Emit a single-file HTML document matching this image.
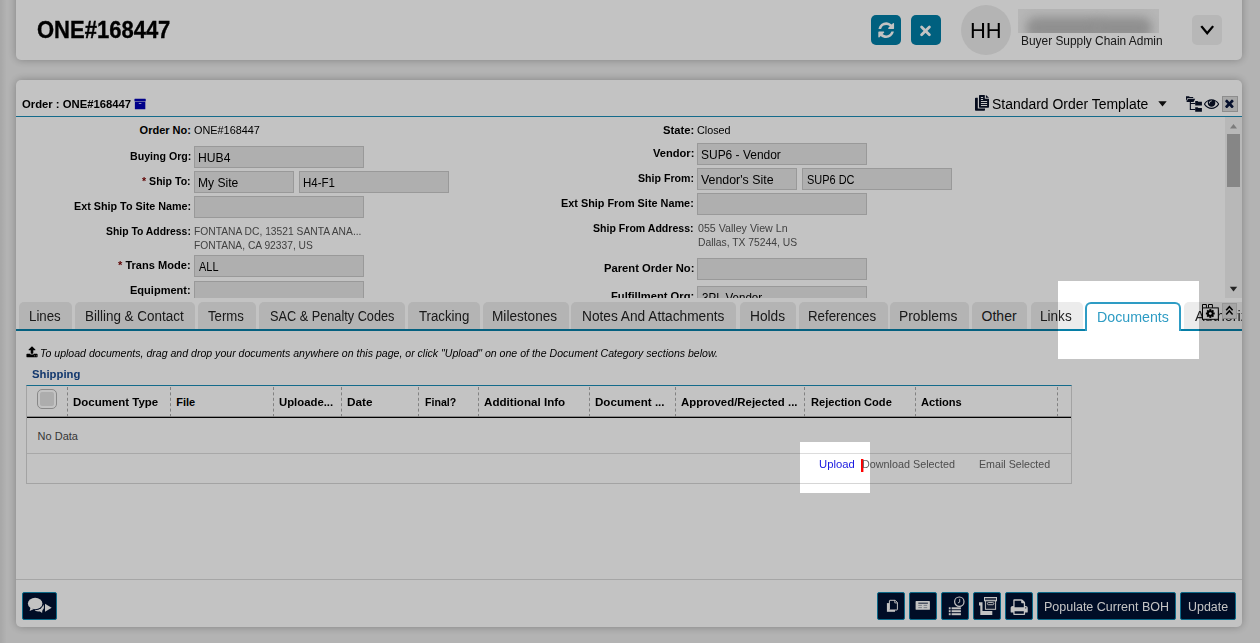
<!DOCTYPE html>
<html lang="en">
<head>
<meta charset="utf-8">
<title>ONE#168447</title>
<style>
html,body{margin:0;padding:0}
body{width:1260px;height:643px;overflow:hidden;position:relative;background:#ebebeb;font-family:"Liberation Sans",sans-serif}
.a{position:absolute;box-sizing:border-box}
.t{position:absolute;white-space:pre;transform-origin:0 0;font-family:"Liberation Sans",sans-serif}
.panel{background:#fff;box-shadow:0 0 9px rgba(0,0,0,.28)}
.inp{position:absolute;box-sizing:border-box;background:#e5e5e5;border:1px solid #c8c8c8;height:22px}
.tab{position:absolute;box-sizing:border-box;top:302px;height:27px;background:#ececec;border-radius:5px 5px 0 0}
.hb{position:absolute;box-sizing:border-box;top:15px;width:30px;height:30px;border-radius:5px;background:#007ea6}
.bb{position:absolute;box-sizing:border-box;top:592px;height:28px;background:#001132;border:1px solid #108bb4;border-radius:2px}
.sep{position:absolute;top:387px;height:30px;width:0;border-left:1px dashed #a9a9a9}
svg{position:absolute;overflow:visible}

</style>
</head>
<body>
<!-- top header bar -->
<div class="a" style="left:0;top:0;width:7px;height:643px;background:linear-gradient(to right,rgba(0,0,0,.07),rgba(0,0,0,0))"></div>
<div class="a panel" style="left:16px;top:-10px;width:1226px;height:70px;border-radius:0 0 5px 5px"></div>
<div class="hb" style="left:871px"></div>
<div class="hb" style="left:911px"></div>
<div class="a" style="left:961px;top:5px;width:50px;height:50px;border-radius:50%;background:#ececec"></div>
<div class="a" style="left:1018px;top:9px;width:141px;height:24px;background:#eeeeee;overflow:hidden"><div class="a" style="left:8px;top:8px;width:76px;height:22px;border-radius:10px;background:#bcbcbc;filter:blur(5px)"></div><div class="a" style="left:74px;top:8px;width:60px;height:22px;border-radius:10px;background:#bcbcbc;filter:blur(5px)"></div></div>
<div class="a" style="left:1192px;top:15px;width:30px;height:30px;border-radius:5px;background:#f0f0f0"></div>

<!-- main order panel -->
<div class="a panel" style="left:16px;top:80px;width:1226px;height:547px;border-radius:5px"></div>
<div class="a" style="left:16px;top:116px;width:1226px;height:1px;background:#1b8cb6"></div>

<!-- form scroll area -->
<div class="a" style="left:0;top:0;width:1260px;height:298px;overflow:hidden">
  <div class="inp" style="left:194px;top:146px;width:170px"></div>
  <div class="inp" style="left:194px;top:171px;width:100px"></div>
  <div class="inp" style="left:299px;top:171px;width:150px"></div>
  <div class="inp" style="left:194px;top:196px;width:170px"></div>
  <div class="inp" style="left:194px;top:255px;width:170px"></div>
  <div class="inp" style="left:194px;top:281px;width:170px"></div>
  <div class="inp" style="left:697px;top:143px;width:170px"></div>
  <div class="inp" style="left:697px;top:168px;width:100px"></div>
  <div class="inp" style="left:802px;top:168px;width:150px"></div>
  <div class="inp" style="left:697px;top:193px;width:170px"></div>
  <div class="inp" style="left:697px;top:258px;width:170px"></div>
  <div class="inp" style="left:697px;top:286px;width:170px"></div>
  <!-- scrollbar -->
  <div class="a" style="left:1225px;top:117px;width:17px;height:181px;background:#f1f1f1"></div>
  <div class="a" style="left:1227px;top:134px;width:13px;height:53px;background:#b0b0b0"></div>
  <svg style="left:1225px;top:117px" width="17" height="181" viewBox="0 0 17 181"><path d="M5 11.5 L8.5 7 L12 11.5Z" fill="#a3a3a3"/><path d="M4.800 169.800 L12.200 169.800 L8.500 174.600Z" fill="#303030"/></svg>
<span class="t" style="left:139.60px;top:123px;font-size:11px;line-height:14px;color:#000;font-weight:bold;">Order No:</span>
<span class="t" style="left:194.20px;top:123px;font-size:11px;line-height:14px;color:#000;transform:scaleX(0.9888);">ONE#168447</span>
<span class="t" style="left:129.60px;top:149px;font-size:11px;line-height:14px;color:#000;transform:scaleX(0.9652);font-weight:bold;">Buying Org:</span>
<span class="t" style="left:142.30px;top:174px;font-size:11px;line-height:14px;color:#000;transform:scaleX(0.9630);font-weight:bold;"><span style="color:#7a0000">*</span> Ship To:</span>
<span class="t" style="left:73.80px;top:199px;font-size:11px;line-height:14px;color:#000;transform:scaleX(0.9796);font-weight:bold;">Ext Ship To Site Name:</span>
<span class="t" style="left:105.70px;top:224px;font-size:11px;line-height:14px;color:#000;transform:scaleX(0.9444);font-weight:bold;">Ship To Address:</span>
<span class="t" style="left:194.40px;top:224px;font-size:11px;line-height:14px;color:#555;transform:scaleX(0.9338);">FONTANA DC, 13521 SANTA ANA...</span>
<span class="t" style="left:194.40px;top:238px;font-size:11px;line-height:14px;color:#555;transform:scaleX(0.9317);">FONTANA, CA 92337, US</span>
<span class="t" style="left:118.40px;top:258px;font-size:11px;line-height:14px;color:#000;transform:scaleX(1.0062);font-weight:bold;"><span style="color:#7a0000">*</span> Trans Mode:</span>
<span class="t" style="left:130.30px;top:283px;font-size:11px;line-height:14px;color:#000;transform:scaleX(1.0028);font-weight:bold;">Equipment:</span>
<span class="t" style="left:197.73px;top:150px;font-size:12.5px;line-height:16px;color:#000;transform:scaleX(0.9725);">HUB4</span>
<span class="t" style="left:197.63px;top:175px;font-size:12.5px;line-height:16px;color:#000;transform:scaleX(0.9675);">My Site</span>
<span class="t" style="left:302.98px;top:175px;font-size:12.5px;line-height:16px;color:#000;transform:scaleX(0.9207);">H4-F1</span>
<span class="t" style="left:198.50px;top:259px;font-size:12.5px;line-height:16px;color:#000;transform:scaleX(0.8749);">ALL</span>
<span class="t" style="left:663.00px;top:123px;font-size:11px;line-height:14px;color:#000;transform:scaleX(1.0201);font-weight:bold;">State:</span>
<span class="t" style="left:696.80px;top:123px;font-size:11px;line-height:14px;color:#000;transform:scaleX(0.9817);">Closed</span>
<span class="t" style="left:652.80px;top:146px;font-size:11px;line-height:14px;color:#000;transform:scaleX(1.0103);font-weight:bold;">Vendor:</span>
<span class="t" style="left:638.10px;top:171px;font-size:11px;line-height:14px;color:#000;transform:scaleX(0.9654);font-weight:bold;">Ship From:</span>
<span class="t" style="left:561.40px;top:196px;font-size:11px;line-height:14px;color:#000;transform:scaleX(0.9872);font-weight:bold;">Ext Ship From Site Name:</span>
<span class="t" style="left:593.20px;top:221px;font-size:11px;line-height:14px;color:#000;transform:scaleX(0.9602);font-weight:bold;">Ship From Address:</span>
<span class="t" style="left:697.50px;top:221px;font-size:11px;line-height:14px;color:#555;transform:scaleX(0.9683);">055 Valley View Ln</span>
<span class="t" style="left:697.50px;top:235px;font-size:11px;line-height:14px;color:#555;transform:scaleX(0.9399);">Dallas, TX 75244, US</span>
<span class="t" style="left:603.80px;top:261px;font-size:11px;line-height:14px;color:#000;transform:scaleX(1.0197);font-weight:bold;">Parent Order No:</span>
<span class="t" style="left:611.00px;top:289px;font-size:11px;line-height:14px;color:#000;transform:scaleX(1.0158);font-weight:bold;">Fulfillment Org:</span>
<span class="t" style="left:700.90px;top:147px;font-size:12.5px;line-height:16px;color:#000;transform:scaleX(0.9577);">SUP6 - Vendor</span>
<span class="t" style="left:700.90px;top:172px;font-size:12.5px;line-height:16px;color:#000;transform:scaleX(0.9903);">Vendor's Site</span>
<span class="t" style="left:806.50px;top:172px;font-size:12.5px;line-height:16px;color:#000;transform:scaleX(0.8771);">SUP6 DC</span>
<span class="t" style="left:701.60px;top:290px;font-size:12.5px;line-height:16px;color:#000;transform:scaleX(0.9268);">3PL Vendor</span>
</div>

<!-- tabs -->
<div class="a" style="left:0;top:0;width:1242px;height:643px;overflow:hidden">
  <div class="tab" style="left:18.5px;width:53px"></div>
  <div class="tab" style="left:74.5px;width:120px"></div>
  <div class="tab" style="left:197.5px;width:58px"></div>
  <div class="tab" style="left:258.5px;width:146px"></div>
  <div class="tab" style="left:407.5px;width:72px"></div>
  <div class="tab" style="left:482.5px;width:86px"></div>
  <div class="tab" style="left:571px;width:165px"></div>
  <div class="tab" style="left:739.5px;width:56px"></div>
  <div class="tab" style="left:798.5px;width:89px"></div>
  <div class="tab" style="left:889.5px;width:79px"></div>
  <div class="tab" style="left:971.5px;width:55.5px"></div>
  <div class="tab" style="left:1030.5px;width:52.5px"></div>
  <div class="tab" style="left:1183.5px;width:116px"></div>
  <div class="a" style="left:16px;top:329px;width:1226px;height:2px;background:#067ea6"></div>
  <div class="a" style="left:1085px;top:302px;width:96px;height:29px;background:#fff;border:2px solid #2e9cc4;border-bottom:0;border-radius:6px 6px 0 0"></div>
<span class="t" style="left:28.55px;top:307px;font-size:14px;line-height:18px;color:#222;transform:scaleX(0.9486);">Lines</span>
<span class="t" style="left:84.54px;top:307px;font-size:14px;line-height:18px;color:#222;transform:scaleX(0.9605);">Billing &amp; Contact</span>
<span class="t" style="left:208.30px;top:307px;font-size:14px;line-height:18px;color:#222;transform:scaleX(0.9420);">Terms</span>
<span class="t" style="left:269.80px;top:307px;font-size:14px;line-height:18px;color:#222;transform:scaleX(0.9083);">SAC &amp; Penalty Codes</span>
<span class="t" style="left:418.90px;top:307px;font-size:14px;line-height:18px;color:#222;transform:scaleX(0.9451);">Tracking</span>
<span class="t" style="left:492.33px;top:307px;font-size:14px;line-height:18px;color:#222;transform:scaleX(0.9740);">Milestones</span>
<span class="t" style="left:581.62px;top:307px;font-size:14px;line-height:18px;color:#222;transform:scaleX(0.9789);">Notes And Attachments</span>
<span class="t" style="left:749.52px;top:307px;font-size:14px;line-height:18px;color:#222;transform:scaleX(0.9801);">Holds</span>
<span class="t" style="left:808.25px;top:307px;font-size:14px;line-height:18px;color:#222;transform:scaleX(0.9505);">References</span>
<span class="t" style="left:899.21px;top:307px;font-size:14px;line-height:18px;color:#222;transform:scaleX(0.9857);">Problems</span>
<span class="t" style="left:981.60px;top:307px;font-size:14px;line-height:18px;color:#222;">Other</span>
<span class="t" style="left:1040.33px;top:307px;font-size:14px;line-height:18px;color:#222;transform:scaleX(0.9690);">Links</span>
<span class="t" style="left:1096.98px;top:308px;font-size:14px;line-height:18px;color:#2e9cc4;transform:scaleX(1.0157);">Documents</span>
<span class="t" style="left:1194.60px;top:307px;font-size:14px;line-height:18px;color:#222;transform:scaleX(1.0302);">Authorizations</span>
</div>

<!-- documents section -->
<div class="a" style="left:26px;top:385px;width:1046px;height:99px;border:1px solid #d6d6d6;border-top:1px solid #1b8cb6"></div>
<div class="a" style="left:27px;top:416px;width:1044px;height:1px;background:rgba(0,0,0,.3)"></div>
<div class="a" style="left:27px;top:417px;width:1044px;height:1px;background:#000"></div>
<div class="a" style="left:27px;top:453px;width:1044px;height:1px;background:#dcdcdc"></div>
<div class="a" style="left:37px;top:389px;width:20px;height:20px;border:1px solid #b2b2b2;border-radius:5px;background:#fff"></div>
<div class="a" style="left:40px;top:392px;width:14px;height:14px;border-radius:2px;background:#e3e3e3"></div>
<div class="sep" style="left:67px"></div>
<div class="sep" style="left:170px"></div>
<div class="sep" style="left:273px"></div>
<div class="sep" style="left:341px"></div>
<div class="sep" style="left:418px"></div>
<div class="sep" style="left:478px"></div>
<div class="sep" style="left:589px"></div>
<div class="sep" style="left:675px"></div>
<div class="sep" style="left:804px"></div>
<div class="sep" style="left:915px"></div>
<div class="sep" style="left:1057px"></div>
<div class="a" style="left:861px;top:459px;width:2px;height:13px;background:#ff0000"></div><div class="a" style="left:863px;top:459px;width:1px;height:13px;background:rgba(255,0,0,.4)"></div>

<!-- bottom toolbar -->
<div class="a" style="left:16px;top:579px;width:1226px;height:1px;background:#dadada"></div>
<div class="bb" style="left:22px;width:35px"></div>
<div class="bb" style="left:877px;width:28px"></div>
<div class="bb" style="left:909px;width:28px"></div>
<div class="bb" style="left:941px;width:28px"></div>
<div class="bb" style="left:973px;width:28px"></div>
<div class="bb" style="left:1005px;width:28px"></div>
<div class="bb" style="left:1037px;width:139px"></div>
<div class="bb" style="left:1180px;width:56px"></div>

<!-- header icons -->
<svg style="left:876.9px;top:21.2px" width="18.4" height="18.4" viewBox="0 0 1792 1792"><path fill="#fff" d="M1639 1056q0 5-1 7-64 268-268 434.500t-478 166.500q-146 0-282.500-55t-243.500-157l-129 129q-19 19-45 19t-45-19-19-45v-448q0-26 19-45t45-19h448q26 0 45 19t19 45-19 45l-137 137q71 66 161 102t187 36q134 0 250-65t186-179q11-17 53-117 8-23 30-23h192q13 0 22.500 9.500t9.500 22.500zm25-800v448q0 26-19 45t-45 19h-448q-26 0-45-19t-19-45 19-45l138-138q-148-137-349-137-134 0-250 65t-186 179q-11 17-53 117-8 23-30 23h-199q-13 0-22.500-9.500t-9.500-22.500v-7q65-268 270-434.500t480-166.500q146 0 284 55.500t245 156.500l130-129q19-19 45-19t45 19 19 45z"/></svg>
<svg style="left:911px;top:15px" width="30" height="30" viewBox="0 0 30 30"><path d="M10.600 11.900 L18.400 19.700 M18.400 11.900 L10.600 19.700" fill="none" stroke="#fff" stroke-width="2.800" stroke-linecap="round"/></svg>
<svg style="left:0;top:0" width="1260" height="60" viewBox="0 0 1260 60"><path d="M1202 27 L1207.2 33.2 L1212.4 27" fill="none" stroke="#000" stroke-width="2.3" stroke-linecap="square" stroke-linejoin="miter"/></svg>

<!-- title bar icons -->
<svg style="left:134px;top:98px" width="12.2" height="12.2" viewBox="0 0 1792 1792"><path fill="#0000b4" d="M1088 832q0-26-19-45t-45-19h-256q-26 0-45 19t-19 45 19 45 45 19h256q26 0 45-19t19-45zm576-192v960q0 26-19 45t-45 19h-1408q-26 0-45-19t-19-45v-960q0-26 19-45t45-19h1408q26 0 45 19t19 45zm64-448v256q0 26-19 45t-45 19h-1536q-26 0-45-19t-19-45v-256q0-26 19-45t45-19h1536q26 0 45 19t19 45z"/></svg>
<svg style="left:975px;top:95px" width="15" height="16" viewBox="0 0 15 16"><path fill="#0a1228" d="M0 3.6 Q0 2.8 .8 2.8 H2.8 V13.5 H10 V15 Q10 15.8 9.200 15.8 H.8 Q0 15.800 0 15Z"/><path fill="#0a1228" d="M4.800 0 H9.800 V3.700 H14 V12 Q14 12.800 13.200 12.800 H4.800 Q4 12.800 4 12 V.8 Q4 0 4.800 0Z M10.900 0 L14 2.700 H10.900Z"/><path fill="#fff" d="M5.900 2h2.200v.9h-2.200z M5.900 4h2.200v.9h-2.200z M5.900 6.100h6.200v.9h-6.200z M5.900 8.100h6.200v.9h-6.200z M5.900 10.100h6.200v.9h-6.200z"/></svg>
<svg style="left:1158.400px;top:100.600px" width="9" height="6" viewBox="0 0 9 6"><path fill="#111" d="M.3 .2 H8.700 L4.500 5.600Z"/></svg>
<!-- tree icon -->
<svg style="left:1185px;top:95px" width="18" height="18" viewBox="0 0 18 18"><g fill="#0a1228"><path d="M1 1.200 H4 L4.800 2 H8.200 V3 H2.600 L1 6.200Z"/><path d="M3 3.700 H10.200 L8.600 6.900 H1.400Z"/><path d="M4.800 6.900 h1.100 v1.100 h4.400 v1.100 h-4.400 v4.900 h4.400 v1.100 h-5.500z"/><path d="M10.200 6.100 H12.600 L13.300 6.800 H16.900 V10.500 H10.200Z"/><path d="M10.200 12.300 H12.600 L13.300 13 H16.900 V16.700 H10.200Z"/></g></svg>
<!-- eye -->
<svg style="left:1204px;top:95.800px" width="15.100" height="15.100" viewBox="0 0 1792 1792"><path fill="#0a1228" d="M1664 960q-152-236-381-353 61 104 61 225 0 185-131.500 316.500t-316.500 131.500-316.500-131.500-131.500-316.500q0-121 61-225-229 117-381 353 133 205 333.500 326.500t434.500 121.500 434.500-121.500 333.500-326.500zm-720-384q0-20-14-34t-34-14q-125 0-214.500 89.500t-89.500 214.500q0 20 14 34t34 14 34-14 14-34q0-86 61-147t147-61q20 0 34-14t14-34zm848 384q0 34-20 69-140 230-376.500 368.500t-499.500 138.500-499.500-139-376.500-368q-20-35-20-69t20-69q140-229 376.500-368t499.500-139 499.500 139 376.500 368q20 35 20 69z"/></svg>
<!-- close box -->
<div class="a" style="left:1222px;top:96px;width:16px;height:16px;background:#dcdcdc;border:1px solid #b9b9b9"></div>
<svg style="left:1223.200px;top:96.700px" width="12.800" height="12.800" viewBox="0 0 1792 1792"><path fill="#08163c" d="M1490 1322q0 40-28 68l-136 136q-28 28-68 28t-68-28l-294-294-294 294q-28 28-68 28t-68-28l-136-136q-28-28-28-68t28-68l294-294-294-294q-28-28-28-68t28-68l136-136q28-28 68-28t68 28l294 294 294-294q28-28 68-28t68 28l136 136q28 28 28 68t-28 68l-294 294 294 294q28 28 28 68z"/></svg>

<!-- tab strip tools: settings + collapse -->
<svg style="left:1202px;top:303.900px" width="17" height="16" viewBox="0 0 17 16"><path d="M.5 3.900 V.5 H4.400 V3.900 M6.500 3.900 V.5 H10.400 V3.900" fill="#f4f4f4" stroke="#000" stroke-width="1"/><rect x=".5" y="3.900" width="15.800" height="11.400" fill="#f6f6f6" stroke="#000" stroke-width="1"/><g transform="translate(8.300 9.500)"><g fill="#000"><rect x="-1" y="-4.400" width="2" height="8.800"/><rect x="-1" y="-4.400" width="2" height="8.800" transform="rotate(45)"/><rect x="-1" y="-4.400" width="2" height="8.800" transform="rotate(90)"/><rect x="-1" y="-4.400" width="2" height="8.800" transform="rotate(135)"/><circle r="3.300"/></g><circle r="1.350" fill="#f6f6f6"/></g></svg>
<div class="a" style="left:1222px;top:303px;width:15px;height:15.500px;background:#d8d8d8;border:1px solid #c4c4c4;border-bottom-color:#b0b0b0"></div>
<svg style="left:1222px;top:303px" width="15" height="15" viewBox="0 0 15 15"><path d="M4.200 7.300 L7.400 3.700 L10.600 7.300 M4.200 11.500 L7.400 7.900 L10.600 11.500" fill="none" stroke="#000" stroke-width="1.500"/></svg>

<!-- upload hint icon -->
<svg style="left:25.600px;top:346.100px" width="12" height="12" viewBox="0 0 1792 1792"><path fill="#000" d="M1344 1472q0-26-19-45t-45-19-45 19-19 45 19 45 45 19 45-19 19-45zm256 0q0-26-19-45t-45-19-45 19-19 45 19 45 45 19 45-19 19-45zm128-224v320q0 40-28 68t-68 28h-1472q-40 0-68-28t-28-68v-320q0-40 28-68t68-28h427q21 56 70.500 92t110.500 36h256q61 0 110.500-36t70.500-92h427q40 0 68 28t28 68zm-325-648q-17 40-59 40h-256v448q0 26-19 45t-45 19h-256q-26 0-45-19t-19-45v-448h-256q-42 0-59-40-17-39 14-69l448-448q18-19 45-19t45 19l448 448q31 30 14 69z"/></svg>

<!-- bottom toolbar icons -->
<svg style="left:22px;top:592px" width="35" height="28" viewBox="0 0 35 28"><g fill="#fff"><ellipse cx="16.700" cy="14.900" rx="5.300" ry="4.600"/><path d="M17.500 19 L20.100 21.100 L20.300 18Z"/></g><ellipse cx="13.150" cy="11.500" rx="8.350" ry="6.850" fill="#001132"/><path d="M7.500 15 L6.300 19.800 L12.500 17.500Z" fill="#001132"/><g fill="#fff"><ellipse cx="13.150" cy="11.500" rx="7.250" ry="5.750"/><path d="M8.500 15.500 L7.600 18.900 L12 16.900Z"/><path d="M23 11.700 V19.700 L29.700 15.700Z"/></g></svg>
<svg style="left:877px;top:592px" width="28" height="28" viewBox="0 0 28 28"><rect x="9.900" y="11.100" width="8.100" height="8.700" fill="#fff"/><path d="M12.900 8.300 H18.200 L20.400 10.500 V17.500 Q20.400 18 19.900 18 H12.900 Q12.400 18 12.400 17.500 V8.800 Q12.400 8.300 12.900 8.300Z" fill="#001132" stroke="#fff" stroke-width="1"/><path d="M17.800 8.300 V10.900 H20.400" fill="none" stroke="#fff" stroke-width=".9"/></svg>
<svg style="left:909px;top:592px" width="28" height="28" viewBox="0 0 28 28"><rect x="6.600" y="9.100" width="14.300" height="8.700" rx=".6" fill="#fff"/><rect x="9.300" y="10.700" width="9.600" height=".9" fill="#001132"/><g fill="#8890a0"><rect x="9.300" y="12.900" width="3.600" height=".8"/><rect x="14.600" y="12.900" width="3.600" height=".8"/><rect x="9.300" y="15.300" width="3.600" height=".8"/><rect x="14.600" y="15.300" width="3.600" height=".8"/></g></svg>
<svg style="left:941px;top:592px" width="28" height="28" viewBox="0 0 28 28"><g fill="#fff"><rect x="7.800" y="15.300" width="1.800" height="2"/><rect x="10.600" y="15.300" width="9.300" height="2"/><rect x="7.800" y="18.200" width="1.800" height="2"/><rect x="10.600" y="18.200" width="9.300" height="2"/><rect x="7.800" y="21.200" width="1.800" height="2"/><rect x="10.600" y="21.200" width="9.300" height="2"/></g><circle cx="18.300" cy="9.700" r="4.700" fill="#001132" stroke="#fff" stroke-width="1.200"/><path d="M18.700 6.900 V10.100 L16.900 11" fill="none" stroke="#fff" stroke-width=".9"/></svg>
<svg style="left:973px;top:592px" width="28" height="28" viewBox="0 0 28 28"><path d="M6 10.300 H9.500 V19.100 H19.300 V22.900 H7.300 V13.500 H6Z" fill="#fff"/><rect x="11.500" y="5.500" width="12" height="3.300" fill="#4a5266" stroke="#fff" stroke-width="1"/><rect x="12.400" y="8.800" width="10.200" height="8.500" fill="#1a2540" stroke="#fff" stroke-width="1"/><rect x="14.400" y="10.500" width="6.400" height="2.200" rx="1.100" fill="none" stroke="#fff" stroke-width=".9"/></svg>
<svg style="left:1010.200px;top:597.800px" width="18.400" height="18.400" viewBox="0 0 1792 1792"><path fill="#fff" d="M448 1536h896v-256h-896v256zm0-640h896v-384h-160q-40 0-68-28t-28-68v-160h-640v640zm1152 64q0-26-19-45t-45-19-45 19-19 45 19 45 45 19 45-19 19-45zm128 0v416q0 13-9.500 22.500t-22.500 9.500h-224v160q0 40-28 68t-68 28h-960q-40 0-68-28t-28-68v-160h-224q-13 0-22.500-9.500t-9.500-22.500v-416q0-79 56.500-135.500t135.500-56.500h64v-544q0-40 28-68t68-28h672q40 0 88 20t76 48l152 152q28 28 48 76t20 88v256h64q79 0 135.500 56.500t56.500 135.500z"/></svg>


<span class="t" style="left:37.00px;top:16px;font-size:23px;line-height:28px;color:#000;transform:scaleX(0.9568);font-weight:bold;-webkit-text-stroke:.35px #000;">ONE#168447</span>
<span class="t" style="left:970.20px;top:17px;font-size:22px;line-height:27px;color:#000;transform:scaleX(0.9971);">HH</span>
<span class="t" style="left:1020.80px;top:33px;font-size:12px;line-height:16px;color:#222;transform:scaleX(0.9921);">Buyer Supply Chain Admin</span>
<span class="t" style="left:22.30px;top:97px;font-size:11px;line-height:14px;color:#000;transform:scaleX(1.0257);font-weight:bold;">Order : ONE#168447</span>
<span class="t" style="left:991.50px;top:95px;font-size:14px;line-height:18px;color:#000;transform:scaleX(0.9961);">Standard Order Template</span>
<span class="t" style="left:40.10px;top:346px;font-size:11px;line-height:14px;color:#000;transform:scaleX(0.9598);font-style:italic;">To upload documents, drag and drop your documents anywhere on this page, or click "Upload" on one of the Document Category sections below.</span>
<span class="t" style="left:32.20px;top:367px;font-size:11px;line-height:14px;color:#184990;transform:scaleX(1.0275);font-weight:bold;">Shipping</span>
<span class="t" style="left:73.40px;top:395px;font-size:11px;line-height:14px;color:#000;transform:scaleX(1.0432);font-weight:bold;">Document Type</span>
<span class="t" style="left:176.20px;top:395px;font-size:11px;line-height:14px;color:#000;font-weight:bold;">File</span>
<span class="t" style="left:279.40px;top:395px;font-size:11px;line-height:14px;color:#000;transform:scaleX(1.0304);font-weight:bold;">Uploade...</span>
<span class="t" style="left:347.30px;top:395px;font-size:11px;line-height:14px;color:#000;transform:scaleX(1.0706);font-weight:bold;">Date</span>
<span class="t" style="left:424.50px;top:395px;font-size:11px;line-height:14px;color:#000;transform:scaleX(0.9642);font-weight:bold;">Final?</span>
<span class="t" style="left:484.20px;top:395px;font-size:11px;line-height:14px;color:#000;transform:scaleX(1.0548);font-weight:bold;">Additional Info</span>
<span class="t" style="left:595.00px;top:395px;font-size:11px;line-height:14px;color:#000;transform:scaleX(1.0538);font-weight:bold;">Document ...</span>
<span class="t" style="left:681.30px;top:395px;font-size:11px;line-height:14px;color:#000;transform:scaleX(1.0355);font-weight:bold;">Approved/Rejected ...</span>
<span class="t" style="left:810.50px;top:395px;font-size:11px;line-height:14px;color:#000;transform:scaleX(1.0094);font-weight:bold;">Rejection Code</span>
<span class="t" style="left:921.10px;top:395px;font-size:11px;line-height:14px;color:#000;transform:scaleX(1.0095);font-weight:bold;">Actions</span>
<span class="t" style="left:37.60px;top:429px;font-size:11px;line-height:14px;color:#4a4a4a;">No Data</span>
<span class="t" style="left:819.30px;top:457px;font-size:11px;line-height:14px;color:#1a1ae0;transform:scaleX(1.0247);">Upload</span>
<span class="t" style="left:862.20px;top:457px;font-size:11px;line-height:14px;color:#666;transform:scaleX(0.9813);">Download Selected</span>
<span class="t" style="left:979.30px;top:457px;font-size:11px;line-height:14px;color:#666;transform:scaleX(0.9706);">Email Selected</span>
<span class="t" style="left:1044.30px;top:599px;font-size:12px;line-height:16px;color:#fff;transform:scaleX(1.0411);">Populate Current BOH</span>
<span class="t" style="left:1187.90px;top:599px;font-size:12px;line-height:16px;color:#fff;transform:scaleX(1.0353);">Update</span>

<!-- dim overlay with two spotlight holes -->
<svg style="left:0;top:0" width="1260" height="643" viewBox="0 0 1260 643"><path fill="rgba(0,0,0,0.235)" fill-rule="evenodd" d="M0 0H1260V643H0Z M1058 281H1199V359H1058Z M800 442H870V493H800Z"/></svg>

</body>
</html>
